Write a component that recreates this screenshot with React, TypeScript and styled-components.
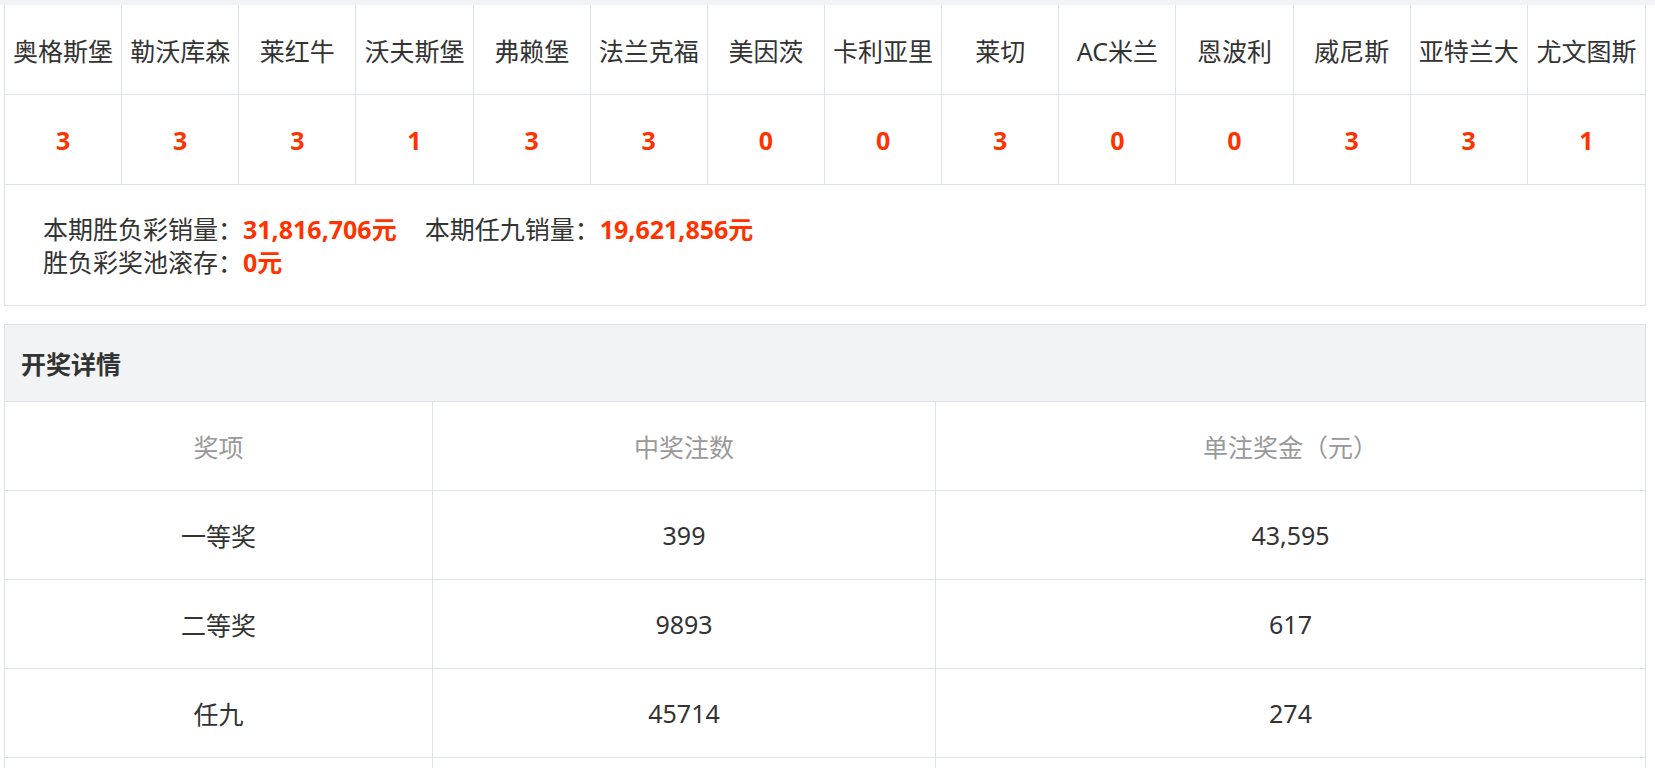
import styled, { createGlobalStyle } from "styled-components";

const teams = ["奥格斯堡", "勒沃库森", "莱红牛", "沃夫斯堡", "弗赖堡", "法兰克福", "美因茨", "卡利亚里", "莱切", "AC米兰", "恩波利", "威尼斯", "亚特兰大", "尤文图斯"];
const results = ["3", "3", "3", "1", "3", "3", "0", "0", "3", "0", "0", "3", "3", "1"];
const prizes = [
  { name: "一等奖", count: "399", amount: "43,595" },
  { name: "二等奖", count: "9893", amount: "617" },
  { name: "任九", count: "45714", amount: "274" },
  { name: "", count: "", amount: "" },
];

const Global = createGlobalStyle`
  body {
    margin: 0;
    background: #fff;
    font-family: "Noto Sans", "Noto Sans CJK SC", sans-serif;
    color: #333;
  }
`;

const Page = styled.div`
  padding: 0 9px 0 4px;
  border-top: 5px solid #f2f3f5;
  height: 763px;
  overflow: hidden;
`;

const Box = styled.div<{ $noTop?: boolean }>`
  border: 1px solid #dde2e8;
  border-top: ${p => (p.$noTop ? "none" : "1px solid #dde2e8")};
`;

const Grid = styled.div`
  display: grid;
  grid-template-columns: repeat(14, 1fr);
`;

const Cell = styled.div<{ $red?: boolean }>`
  height: 89px;
  display: flex;
  align-items: center;
  justify-content: center;
  font-size: 25px;
  white-space: nowrap;
  border-right: 1px solid #dde2e8;
  border-bottom: 1px solid #dde2e8;
  color: ${p => (p.$red ? "#ff3300" : "#333")};
  font-weight: ${p => (p.$red ? 700 : 400)};
  &:nth-child(14n) { border-right: none; }
`;

const Summary = styled.div`
  padding: 28px 38px 26px;
  font-size: 25px;
  line-height: 33px;
`;

const Red = styled.b`
  color: #ff3300;
  margin-right: 28px;
`;

const Details = styled(Box)`
  margin-top: 18px;
`;

const DetailsHead = styled.div`
  height: 76px;
  background: #f2f3f5;
  display: flex;
  align-items: center;
  padding-left: 16px;
  font-size: 25px;
  font-weight: 700;
  border-bottom: 1px solid #dde2e8;
`;

const PrizeRow = styled.div`
  display: grid;
  grid-template-columns: 428px 503px 1fr;
`;

const PrizeCell = styled.div<{ $head?: boolean }>`
  height: 88px;
  display: flex;
  align-items: center;
  justify-content: center;
  font-size: 25px;
  color: ${p => (p.$head ? "#999" : "#333")};
  border-right: 1px solid #dde2e8;
  border-bottom: 1px solid #dde2e8;
  &:last-child { border-right: none; }
`;

export default function App() {
  return (
    <>
      <Global />
      <Page>
        <Box $noTop>
          <Grid>
            {teams.map(t => <Cell key={t}>{t}</Cell>)}
            {results.map((r, i) => <Cell key={i} $red>{r}</Cell>)}
          </Grid>
          <Summary>
            本期胜负彩销量：<Red>31,816,706元</Red>本期任九销量：<Red>19,621,856元</Red>
            <br />
            胜负彩奖池滚存：<Red>0元</Red>
          </Summary>
        </Box>
        <Details>
          <DetailsHead>开奖详情</DetailsHead>
          <PrizeRow>
            <PrizeCell $head>奖项</PrizeCell>
            <PrizeCell $head>中奖注数</PrizeCell>
            <PrizeCell $head>单注奖金（元）</PrizeCell>
          </PrizeRow>
          {prizes.map((p, i) => (
            <PrizeRow key={i}>
              <PrizeCell>{p.name}</PrizeCell>
              <PrizeCell>{p.count}</PrizeCell>
              <PrizeCell>{p.amount}</PrizeCell>
            </PrizeRow>
          ))}
        </Details>
      </Page>
    </>
  );
}
